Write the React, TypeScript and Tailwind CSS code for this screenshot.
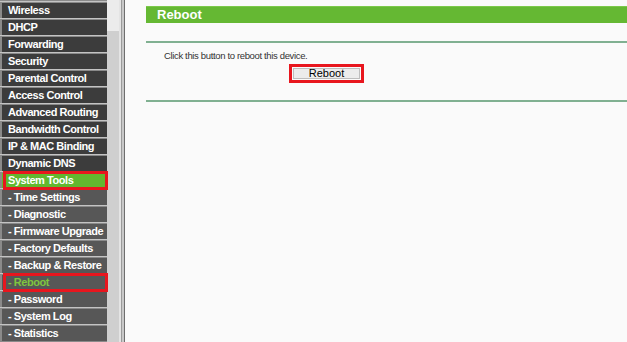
const menu: { label: string; sub?: boolean; state?: "group" | "active" }[] = [
  { label: "Wireless" },
  { label: "DHCP" },
  { label: "Forwarding" },
  { label: "Security" },
  { label: "Parental Control" },
  { label: "Access Control" },
  { label: "Advanced Routing" },
  { label: "Bandwidth Control" },
  { label: "IP & MAC Binding" },
  { label: "Dynamic DNS" },
  { label: "System Tools", state: "group" },
  { label: "- Time Settings", sub: true },
  { label: "- Diagnostic", sub: true },
  { label: "- Firmware Upgrade", sub: true },
  { label: "- Factory Defaults", sub: true },
  { label: "- Backup & Restore", sub: true },
  { label: "- Reboot", sub: true, state: "active" },
  { label: "- Password", sub: true },
  { label: "- System Log", sub: true },
  { label: "- Statistics", sub: true },
];

function MenuRow({ item }: { item: (typeof menu)[number] }) {
  const bg = item.state === "group" ? "bg-[#62b72f]" : item.sub ? "bg-[#575757]" : "bg-[#3c3c3c]";
  const color = item.state === "active" ? "text-[#7ec53e]" : "text-white";
  return (
    <div className="h-[17px] border-t border-[#c4c4c4] bg-[#8a8a8a] pl-[2px] pt-px">
      <div
        className={`relative flex h-[15px] items-center whitespace-nowrap pl-[6px] text-[11px] font-bold leading-none tracking-[-0.45px] ${bg} ${color}`}
      >
        {item.label}
        {item.state && (
          <span className="pointer-events-none absolute -top-[2px] -bottom-[2px] left-[1px] -right-[1px] border-[3px] border-[#e8161e]" />
        )}
      </div>
    </div>
  );
}

export default function App() {
  return (
    <div className="flex h-[342px] w-[627px] overflow-hidden bg-[#fafafa] font-['Liberation_Sans',Arial,sans-serif]">
      {/* left menu */}
      <div className="w-[107px] shrink-0 bg-[#8a8a8a] pt-px">
        {menu.map((m) => (
          <MenuRow key={m.label} item={m} />
        ))}
      </div>

      {/* scrollbar */}
      <div className="flex w-[12px] shrink-0 flex-col bg-[#ececec]">
        <div className="h-[31px]" />
        <div className="flex-1 bg-[#cfcfcf]" />
      </div>
      <div className="w-[2px] shrink-0 bg-[#e4e4e4]" />
      <div className="w-px shrink-0 bg-[#9a9a9a]" />
      <div className="w-[2px] shrink-0 bg-[#c8c8c8]" />
      <div className="w-px shrink-0 bg-[#6e6e6e]" />

      {/* content */}
      <div className="flex-1 pl-[21px] pt-[6px]">
        <div className="flex h-[17px] items-center border-t border-[#7cc94a] bg-[#65b833] pl-[11px] text-[13px] font-bold text-white">
          Reboot
        </div>
        <div className="mt-[18px] h-[2px] bg-[#80b091]" />
        <p className="mt-[7px] pl-[18px] text-[9.5px] leading-[11px] tracking-[-0.35px] text-[#333]">
          Click this button to reboot this device.
        </p>
        <div className="mt-[3px] flex pl-[143px]">
          <div className="flex border-[3px] border-[#e8161e] p-px">
            <button className="flex h-[11px] w-[67px] items-center justify-center border border-[#bdbdbd] bg-[#ececec] text-[11px] leading-none text-black">
              Reboot
            </button>
          </div>
        </div>
        <div className="mt-[17px] h-[2px] bg-[#80b091]" />
      </div>
    </div>
  );
}
